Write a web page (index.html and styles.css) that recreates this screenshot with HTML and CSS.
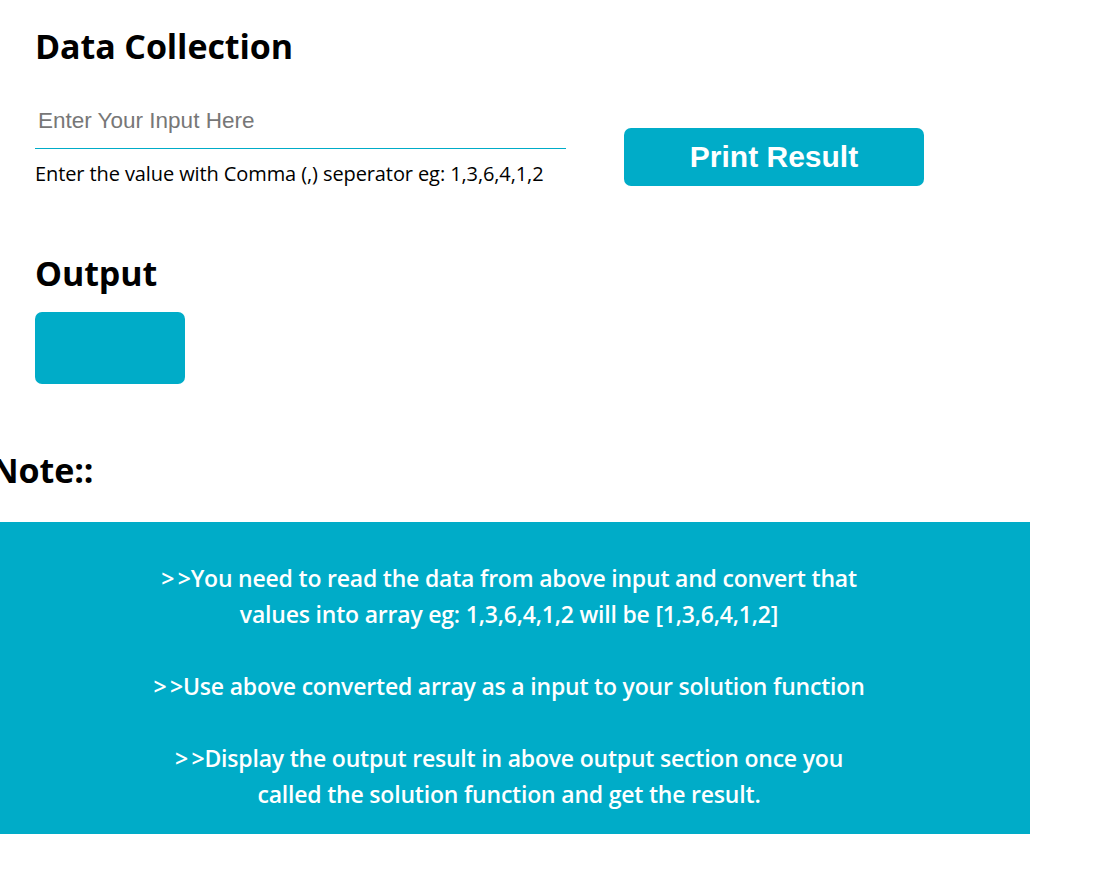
FILE: index.html
```html
<!DOCTYPE html>
<html lang="en">
<head>
<meta charset="utf-8">
<title>Data Collection</title>
<link rel="stylesheet" href="styles.css">
</head>
<body>
<main class="page">
  <section class="collect">
    <h1 class="title">Data Collection</h1>
    <div class="form-row">
      <div class="field">
        <input class="input" type="text" placeholder="Enter Your Input Here">
        <p class="hint">Enter the value with Comma (,) seperator eg: 1,3,6,4,1,2</p>
      </div>
      <button class="btn" type="button">Print Result</button>
    </div>
  </section>
  <section class="output">
    <h2 class="title">Output</h2>
    <div class="output-box"></div>
  </section>
  <h2 class="note-title">Note::</h2>
  <section class="note">
    <p>&gt;&thinsp;&gt;You need to read the data from above input and convert that<br>values into array eg: 1,3,6,4,1,2 will be [1,3,6,4,1,2]</p>
    <p>&gt;&thinsp;&gt;Use above converted array as a input to your solution function</p>
    <p>&gt;&thinsp;&gt;Display the output result in above output section once you<br>called the solution function and get the result.</p>
  </section>
</main>
</body>
</html>
```

FILE: styles.css
```css
* { box-sizing: border-box; }
body {
  margin: 0;
  background: #fff;
  color: #000;
  font-family: "Open Sans", "Noto Sans", sans-serif;
}
.page {
  width: 1030px;
}
.collect, .output {
  padding-left: 35px;
}
.title {
  margin: 0;
  font-size: 34px;
  font-weight: 700;
  line-height: 44px;
  letter-spacing: -0.1px;
}
.collect {
  padding-top: 24px;
}
.form-row {
  display: flex;
  align-items: flex-start;
  gap: 58px;
  margin-top: 28px;
}
.field {
  width: 531px;
}
.input {
  display: block;
  width: 100%;
  height: 53px;
  border: none;
  border-bottom: 1px solid #00acc8;
  outline: none;
  padding: 0 3px 2px;
  font-family: "Liberation Sans", Arial, sans-serif;
  font-size: 22.5px;
  color: #000;
  background: transparent;
}
.input::placeholder {
  color: #777;
}
.hint {
  margin: 12px 0 0;
  font-size: 20px;
  line-height: 26px;
  letter-spacing: -0.1px;
}
.btn {
  margin-top: 32px;
  width: 300px;
  height: 58px;
  border: none;
  border-radius: 7px;
  background: #00acc8;
  color: #fff;
  font-family: "Liberation Sans", Arial, sans-serif;
  font-weight: 700;
  font-size: 30px;
  padding: 0;
}
.output {
  padding-top: 64px;
}
.output-box {
  margin-top: 17px;
  width: 150px;
  height: 72px;
  border-radius: 7px;
  background: #00acc8;
}
.note-title {
  margin: 64px 0 0 -9px;
  font-size: 34px;
  font-weight: 700;
  line-height: 44px;
  letter-spacing: -0.1px;
}
.note {
  margin-top: 30px;
  background: #00acc8;
  color: #fff;
  text-align: center;
  padding: 38px 12px 22px 0;
}
.note p {
  margin: 0 0 36px;
  font-size: 23px;
  font-weight: 600;
  line-height: 36px;
  letter-spacing: -0.2px;
}
.note p:last-child {
  margin-bottom: 0;
}
```
